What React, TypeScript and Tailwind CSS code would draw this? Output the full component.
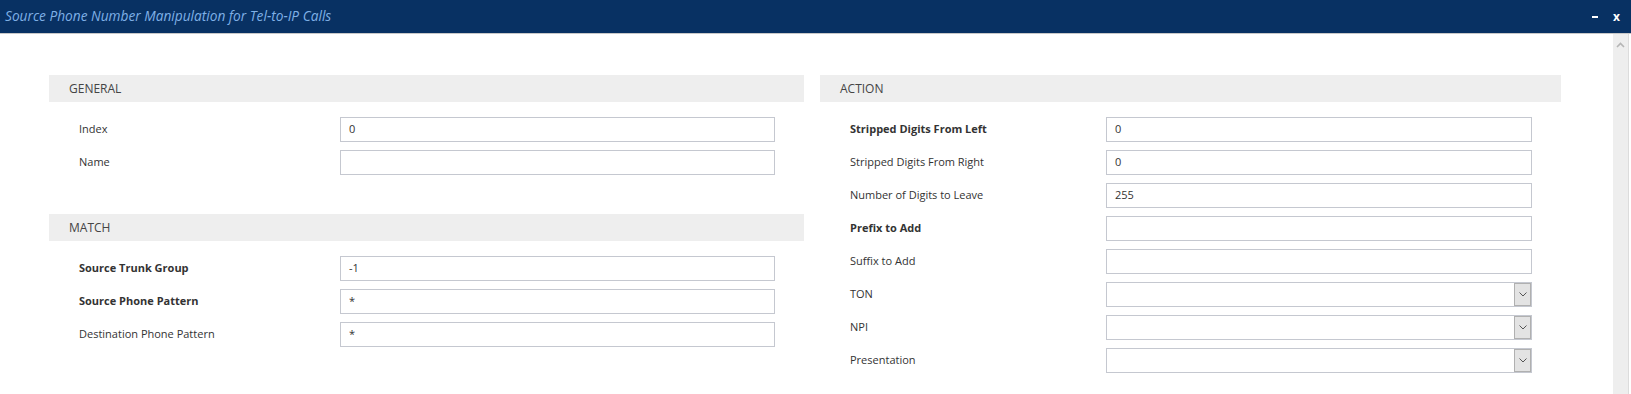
import React from "react";

const font = { fontFamily: '"Open Sans", "Noto Sans", sans-serif' };

function Field({ label, value, bold, select, labelW, inputW }: { label: string; value?: string; bold?: boolean; select?: boolean; labelW: string; inputW: string }) {
  return (
    <div className="flex items-center h-[25px] mb-[8px]">
      <div className={`${labelW} pl-[30px] text-[11px] text-[#333] ${bold ? "font-bold" : ""}`}>{label}</div>
      <div className={`${inputW} h-[25px] border border-[#c5c8d0] bg-white flex items-center relative`}>
        <span className="pl-[8px] text-[11px] text-[#333]">{value}</span>
        {select && (
          <div className="absolute right-0 top-0 h-[23px] w-[17px] bg-[#e3e3e3] border border-[#b0b0b0] flex items-center justify-center">
            <svg width="8" height="5" viewBox="0 0 8 5"><path d="M0.5 0.5 L4 4 L7.5 0.5" fill="none" stroke="#555" strokeWidth="1" /></svg>
          </div>
        )}
      </div>
    </div>
  );
}

function SectionHeader({ title }: { title: string }) {
  return (
    <div className="h-[27px] bg-[#eeeeee] flex items-center pl-[20px] text-[12px] text-[#444]">{title}</div>
  );
}

export default function App() {
  return (
    <div className="w-[1631px] h-[394px] bg-white overflow-hidden flex flex-col" style={font}>
      <div className="h-[34px] bg-[#083163] flex items-center justify-between border-b border-[#c8c8c8] shrink-0">
        <div className="pl-[5px] italic text-[13.7px] text-[#7fb0e6]">Source Phone Number Manipulation for Tel-to-IP Calls</div>
        <div className="flex items-center pr-[11px] text-white">
          <div className="w-[6px] h-[2px] bg-white mr-[15px]" />
          <div className="text-[12px] font-bold leading-none">x</div>
        </div>
      </div>
      <div className="flex flex-1">
        <div className="flex-1 flex pl-[49px] pt-[41px]">
          <div className="w-[755px] flex flex-col">
            <SectionHeader title="GENERAL" />
            <div className="pt-[15px]">
              <Field label="Index" value="0" labelW="w-[291px]" inputW="w-[435px]" />
              <Field label="Name" labelW="w-[291px]" inputW="w-[435px]" />
            </div>
            <div className="mt-[31px]">
              <SectionHeader title="MATCH" />
            </div>
            <div className="pt-[15px]">
              <Field label="Source Trunk Group" value="-1" bold labelW="w-[291px]" inputW="w-[435px]" />
              <Field label="Source Phone Pattern" value="*" bold labelW="w-[291px]" inputW="w-[435px]" />
              <Field label="Destination Phone Pattern" value="*" labelW="w-[291px]" inputW="w-[435px]" />
            </div>
          </div>
          <div className="w-[741px] ml-[16px] flex flex-col">
            <SectionHeader title="ACTION" />
            <div className="pt-[15px]">
              <Field label="Stripped Digits From Left" value="0" bold labelW="w-[286px]" inputW="w-[426px]" />
              <Field label="Stripped Digits From Right" value="0" labelW="w-[286px]" inputW="w-[426px]" />
              <Field label="Number of Digits to Leave" value="255" labelW="w-[286px]" inputW="w-[426px]" />
              <Field label="Prefix to Add" bold labelW="w-[286px]" inputW="w-[426px]" />
              <Field label="Suffix to Add" labelW="w-[286px]" inputW="w-[426px]" />
              <Field label="TON" select labelW="w-[286px]" inputW="w-[426px]" />
              <Field label="NPI" select labelW="w-[286px]" inputW="w-[426px]" />
              <Field label="Presentation" select labelW="w-[286px]" inputW="w-[426px]" />
            </div>
          </div>
        </div>
        <div className="w-[16px] bg-[#eeeeee] border-r border-[#dcdcdc] flex justify-center pt-[8px] shrink-0">
          <svg width="9" height="6" viewBox="0 0 9 6"><path d="M1 5 L4.5 1.5 L8 5" fill="none" stroke="#b5b5b5" strokeWidth="1.6" /></svg>
        </div>
        <div className="w-[2px] bg-white shrink-0" />
      </div>
    </div>
  );
}
